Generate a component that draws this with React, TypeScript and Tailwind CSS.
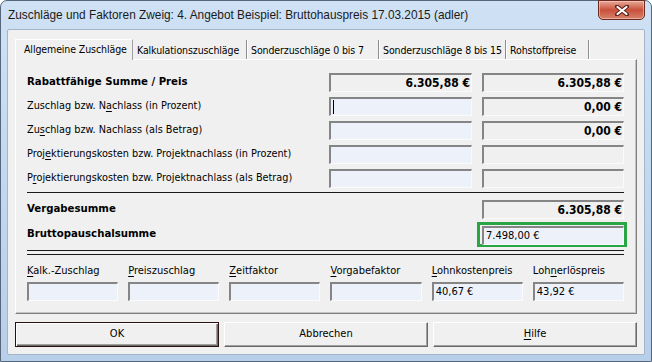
import React from 'react';

const uiFont = { fontFamily: "'DejaVu Sans Condensed', 'DejaVu Sans', sans-serif" };
const titleFont = { fontFamily: "'Liberation Sans', Arial, sans-serif" };

const U: React.FC<{ children: React.ReactNode }> = ({ children }) => (
  <span className="underline underline-offset-[2px]">{children}</span>
);

type FieldProps = {
  value?: string;
  edit?: boolean;
  bold?: boolean;
  caret?: boolean;
  className?: string;
};

const Field: React.FC<FieldProps> = ({ value, edit, bold, caret, className = '' }) => (
  <div
    className={`h-[19px] flex items-center px-[2px] border-t-2 border-l-2 border-b border-r border-t-[#858585] border-l-[#858585] border-b-[#fbfbfb] border-r-[#fbfbfb] ${
      edit ? 'bg-[#edf2fa]' : 'bg-[#f0f0f0]'
    } ${bold ? 'justify-end font-bold text-[12px] pr-[1px]' : 'text-[11px]'} ${className}`}
  >
    {caret && <span className="w-px h-[14px] bg-black" />}
    {value}
  </div>
);

const Row: React.FC<{ label: React.ReactNode; bold?: boolean; children: React.ReactNode }> = ({
  label,
  bold,
  children,
}) => (
  <div className="grid grid-cols-[1fr_143px_142px] gap-x-[10px] items-center">
    <div className={bold ? 'font-bold text-[11.3px] whitespace-nowrap' : 'text-[10.8px] whitespace-nowrap'}>{label}</div>
    {children}
  </div>
);

const tabs = [
  { label: 'Kalkulationszuschläge', w: 'w-[114px]' },
  { label: 'Sonderzuschläge 0 bis 7', w: 'w-[132px]' },
  { label: 'Sonderzuschläge 8 bis 15', w: 'w-[127px]' },
  { label: 'Rohstoffpreise', w: 'w-[83px]' },
];

const bottomFields = [
  { label: <><U>K</U>alk.-Zuschlag</>, value: '' },
  { label: <><U>P</U>reiszuschlag</>, value: '' },
  { label: <><U>Z</U>eitfaktor</>, value: '' },
  { label: <><U>V</U>orgabefaktor</>, value: '' },
  { label: <><U>L</U>ohnkostenpreis</>, value: '40,67 €' },
  { label: <>Loh<U>n</U>erlöspreis</>, value: '43,92 €' },
];

const App: React.FC = () => {
  return (
    <div className="w-[652px] h-[362px] overflow-hidden bg-white">
      <div className="w-[652px] h-[362px] flex flex-col rounded-t-[7px] border border-[#56677c] bg-gradient-to-b from-[#cfe1f4] via-[#c2d8f0] to-[#b8cfe9]">
        {/* title bar */}
        <div className="h-[28px] relative flex items-start">
          <div style={titleFont} className="pl-[7px] pt-[7px] text-[11.85px] leading-[14px] text-[#1b1b1b] whitespace-nowrap">
            Zuschläge und Faktoren Zweig: 4. Angebot Beispiel: Bruttohauspreis 17.03.2015 (adler)
          </div>
          <div className="absolute top-[-1px] right-[6px] w-[47px] h-[20px] rounded-b-[5px] border border-[#6a2a20] bg-gradient-to-b from-[#e6a898] via-[#c9503a] to-[#d6826b] flex items-center justify-center shadow-[inset_0_0_0_1px_rgba(255,220,210,0.5)]">
            <svg width="14" height="11" viewBox="0 0 14 11">
              <path d="M2 1.5 L12 9.5 M12 1.5 L2 9.5" stroke="#5a1f17" strokeWidth="4" strokeLinecap="round" />
              <path d="M2.5 2 L11.5 9 M11.5 2 L2.5 9" stroke="#ffffff" strokeWidth="2.2" strokeLinecap="round" />
            </svg>
          </div>
        </div>

        {/* client area */}
        <div
          style={uiFont}
          className="mx-[6px] mb-[6px] flex-1 rounded-[2px] border border-[#a2b5cb] bg-[#f0f0f0] text-black px-[7px] pt-[8px] flex flex-col"
        >
          {/* tabs */}
          <div className="flex items-end h-[21px]">
            <div className="w-[118px] h-[21px] pl-[8px] pt-[2px] text-[10.5px] tracking-[-0.1px] whitespace-nowrap border-t border-l border-white relative z-10 -mb-px bg-[#f0f0f0] border-r border-r-[#a0a0a0]">
              Allgemeine Zuschläge
            </div>
            {tabs.map((t) => (
              <div
                key={t.label}
                className={`${t.w} h-[19px] pl-[4px] pt-[3px] text-[10.5px] tracking-[-0.1px] whitespace-nowrap border-r border-r-[#8d8d8d] shadow-[1px_0_0_#ffffff]`}
              >
                {t.label}
              </div>
            ))}
          </div>

          {/* tab panel */}
          <div className="h-[255px] border-t border-l border-white border-r border-b border-r-[#7f7f7f] border-b-[#7f7f7f] shadow-[inset_-1px_-1px_0_#c4c4c4] pl-[11px] pr-[12px] pt-[13px] flex flex-col">
            <div className="flex flex-col gap-[5px]">
              <Row label="Rabattfähige Summe / Preis" bold>
                <Field value="6.305,88 €" bold />
                <Field value="6.305,88 €" bold />
              </Row>
              <Row label={<>Zuschlag bzw. N<U>a</U>chlass (in Prozent)</>}>
                <Field edit caret />
                <Field value="0,00 €" bold />
              </Row>
              <Row label={<>Zu<U>s</U>chlag bzw. Nachlass (als Betrag)</>}>
                <Field edit />
                <Field value="0,00 €" bold />
              </Row>
              <Row label={<>Proj<U>e</U>ktierungskosten bzw. Projektnachlass (in Prozent)</>}>
                <Field edit />
                <Field />
              </Row>
              <Row label={<>P<U>r</U>ojektierungskosten bzw. Projektnachlass (als Betrag)</>}>
                <Field edit />
                <Field />
              </Row>
            </div>

            <div className="h-px bg-[#1a1a1a] mt-[4px]" />

            <div className="mt-[7px]">
              <Row label="Vergabesumme" bold>
                <div />
                <Field value="6.305,88 €" bold />
              </Row>
            </div>

            <div className="mt-[3px]">
              <Row label="Bruttopauschalsumme" bold>
                <div />
                <div className="h-[25px] -ml-[5px] -mr-[3px] border-[3px] border-[#2aa544] pl-[2px] pt-px">
                  <Field value="7.498,00 €" edit className="h-[18px]" />
                </div>
              </Row>
            </div>

            <div className="h-px bg-[#1a1a1a] mt-[3px]" />
            <div className="h-px bg-[#1a1a1a] mt-[3px]" />

            <div className="grid grid-cols-6 gap-x-[10px] mt-[9px]">
              {bottomFields.map((f, i) => (
                <div key={i} className="flex flex-col">
                  <div className="text-[11px] h-[14px] leading-[14px] whitespace-nowrap">{f.label}</div>
                  <Field value={f.value} edit className="mt-[4px]" />
                </div>
              ))}
            </div>
          </div>

          {/* buttons */}
          <div className="grid grid-cols-3 gap-x-[5px] mt-[8px]">
            <button className="h-[25px] text-[11px] border border-[#2b1010] bg-[#f0f0f0] shadow-[inset_1px_1px_0_#ffffff,inset_-1px_-1px_0_#696969,inset_-2px_-2px_0_#a0a0a0]">
              OK
            </button>
            <button className="h-[25px] text-[11px] border-t border-l border-white border-r border-b border-r-[#696969] border-b-[#696969] bg-[#f0f0f0] shadow-[inset_-1px_-1px_0_#a0a0a0]">
              Abbrechen
            </button>
            <button className="h-[25px] text-[11px] border-t border-l border-white border-r border-b border-r-[#696969] border-b-[#696969] bg-[#f0f0f0] shadow-[inset_-1px_-1px_0_#a0a0a0]">
              <U>H</U>ilfe
            </button>
          </div>
        </div>
      </div>
    </div>
  );
};

export default App;
